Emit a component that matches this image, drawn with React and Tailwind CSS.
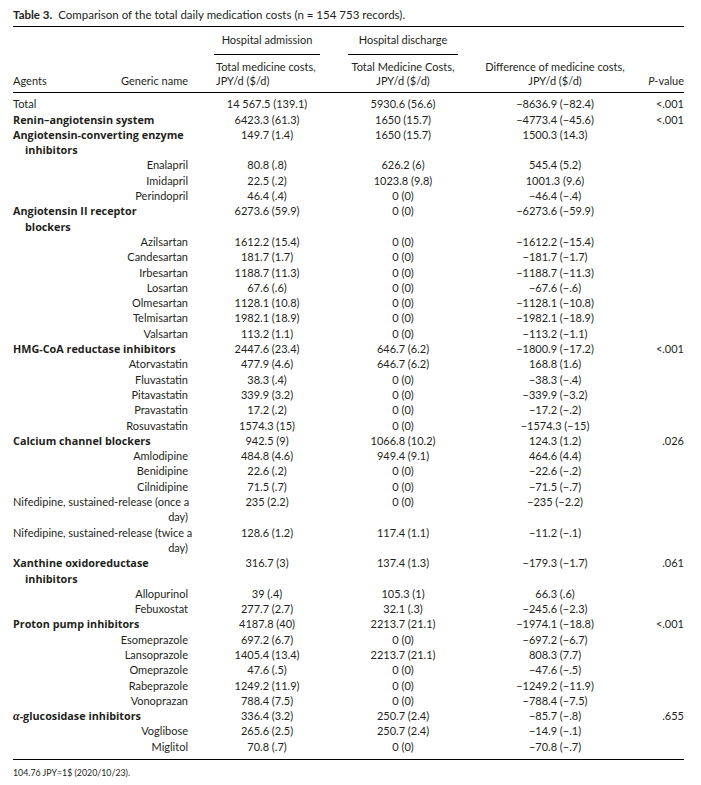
const rows = [
  { kind: 'plain', name: 'Total', a: '14 567.5 (139.1)', d: '5930.6 (56.6)', diff: '−8636.9 (−82.4)', p: '<.001' },
  { kind: 'cat', name: ['Renin–angiotensin system'], a: '6423.3 (61.3)', d: '1650 (15.7)', diff: '−4773.4 (−45.6)', p: '<.001' },
  { kind: 'cat', name: ['Angiotensin-converting enzyme', 'inhibitors'], a: '149.7 (1.4)', d: '1650 (15.7)', diff: '1500.3 (14.3)' },
  { name: 'Enalapril', a: '80.8 (.8)', d: '626.2 (6)', diff: '545.4 (5.2)' },
  { name: 'Imidapril', a: '22.5 (.2)', d: '1023.8 (9.8)', diff: '1001.3 (9.6)' },
  { name: 'Perindopril', a: '46.4 (.4)', d: '0 (0)', diff: '−46.4 (−.4)' },
  { kind: 'cat', name: ['Angiotensin II receptor', 'blockers'], a: '6273.6 (59.9)', d: '0 (0)', diff: '−6273.6 (−59.9)' },
  { name: 'Azilsartan', a: '1612.2 (15.4)', d: '0 (0)', diff: '−1612.2 (−15.4)' },
  { name: 'Candesartan', a: '181.7 (1.7)', d: '0 (0)', diff: '−181.7 (−1.7)' },
  { name: 'Irbesartan', a: '1188.7 (11.3)', d: '0 (0)', diff: '−1188.7 (−11.3)' },
  { name: 'Losartan', a: '67.6 (.6)', d: '0 (0)', diff: '−67.6 (−.6)' },
  { name: 'Olmesartan', a: '1128.1 (10.8)', d: '0 (0)', diff: '−1128.1 (−10.8)' },
  { name: 'Telmisartan', a: '1982.1 (18.9)', d: '0 (0)', diff: '−1982.1 (−18.9)' },
  { name: 'Valsartan', a: '113.2 (1.1)', d: '0 (0)', diff: '−113.2 (−1.1)' },
  { kind: 'cat', name: ['HMG-CoA reductase inhibitors'], a: '2447.6 (23.4)', d: '646.7 (6.2)', diff: '−1800.9 (−17.2)', p: '<.001' },
  { name: 'Atorvastatin', a: '477.9 (4.6)', d: '646.7 (6.2)', diff: '168.8 (1.6)' },
  { name: 'Fluvastatin', a: '38.3 (.4)', d: '0 (0)', diff: '−38.3 (−.4)' },
  { name: 'Pitavastatin', a: '339.9 (3.2)', d: '0 (0)', diff: '−339.9 (−3.2)' },
  { name: 'Pravastatin', a: '17.2 (.2)', d: '0 (0)', diff: '−17.2 (−.2)' },
  { name: 'Rosuvastatin', a: '1574.3 (15)', d: '0 (0)', diff: '−1574.3 (−15)' },
  { kind: 'cat', name: ['Calcium channel blockers'], a: '942.5 (9)', d: '1066.8 (10.2)', diff: '124.3 (1.2)', p: '.026' },
  { name: 'Amlodipine', a: '484.8 (4.6)', d: '949.4 (9.1)', diff: '464.6 (4.4)' },
  { name: 'Benidipine', a: '22.6 (.2)', d: '0 (0)', diff: '−22.6 (−.2)' },
  { name: 'Cilnidipine', a: '71.5 (.7)', d: '0 (0)', diff: '−71.5 (−.7)' },
  { kind: 'wrap', name: ['Nifedipine, sustained-release (once a', 'day)'], a: '235 (2.2)', d: '0 (0)', diff: '−235 (−2.2)' },
  { kind: 'wrap', name: ['Nifedipine, sustained-release (twice a', 'day)'], a: '128.6 (1.2)', d: '117.4 (1.1)', diff: '−11.2 (−.1)' },
  { kind: 'cat', name: ['Xanthine oxidoreductase', 'inhibitors'], a: '316.7 (3)', d: '137.4 (1.3)', diff: '−179.3 (−1.7)', p: '.061' },
  { name: 'Allopurinol', a: '39 (.4)', d: '105.3 (1)', diff: '66.3 (.6)' },
  { name: 'Febuxostat', a: '277.7 (2.7)', d: '32.1 (.3)', diff: '−245.6 (−2.3)' },
  { kind: 'cat', name: ['Proton pump inhibitors'], a: '4187.8 (40)', d: '2213.7 (21.1)', diff: '−1974.1 (−18.8)', p: '<.001' },
  { name: 'Esomeprazole', a: '697.2 (6.7)', d: '0 (0)', diff: '−697.2 (−6.7)' },
  { name: 'Lansoprazole', a: '1405.4 (13.4)', d: '2213.7 (21.1)', diff: '808.3 (7.7)' },
  { name: 'Omeprazole', a: '47.6 (.5)', d: '0 (0)', diff: '−47.6 (−.5)' },
  { name: 'Rabeprazole', a: '1249.2 (11.9)', d: '0 (0)', diff: '−1249.2 (−11.9)' },
  { name: 'Vonoprazan', a: '788.4 (7.5)', d: '0 (0)', diff: '−788.4 (−7.5)' },
  { kind: 'alpha', name: ['-glucosidase inhibitors'], a: '336.4 (3.2)', d: '250.7 (2.4)', diff: '−85.7 (−.8)', p: '.655' },
  { name: 'Voglibose', a: '265.6 (2.5)', d: '250.7 (2.4)', diff: '−14.9 (−.1)' },
  { name: 'Miglitol', a: '70.8 (.7)', d: '0 (0)', diff: '−70.8 (−.7)' },
];

function NameCell({ row }) {
  if (row.kind === 'plain') {
    return <div>{row.name}</div>;
  }
  if (row.kind === 'cat' || row.kind === 'alpha') {
    // bold group names are set wider than the body text
    return (
      <div className="font-bold whitespace-nowrap font-['Open_Sans',sans-serif] text-[10.8px] leading-[15.3px]">
        <div className="h-[15.3px]">
          {row.kind === 'alpha' && (
            <span className="italic font-['Liberation_Serif',serif] text-[12px] leading-none">α</span>
          )}
          {row.name[0]}
        </div>
        {row.name[1] && <div className="pl-[12px] h-[15.3px]">{row.name[1]}</div>}
      </div>
    );
  }
  if (row.kind === 'wrap') {
    return (
      <div className="whitespace-nowrap">
        <div>{row.name[0]}</div>
        <div className="text-right">{row.name[1]}</div>
      </div>
    );
  }
  return <div className="text-right">{row.name}</div>;
}

export default function App() {
  return (
    <div className="bg-white w-[701px] h-[785px] text-[#231f20] font-['Lato',sans-serif] text-[11px] leading-[15.3px] pl-[13px] pt-[7px]">
      {/* Caption */}
      <div className="text-[11.5px] leading-[16px] whitespace-nowrap">
        <span className="font-bold">Table 3.</span>
        <span className="ml-[6px]">Comparison of the total daily medication costs (n = 154 753 records).</span>
      </div>

      <table className="mt-[3px] w-[671px] table-fixed border-collapse">
        <colgroup>
          <col className="w-[187px]" />
          <col className="w-[134px]" />
          <col className="w-[138px]" />
          <col className="w-[166px]" />
          <col className="w-[46px]" />
        </colgroup>
        <thead>
          <tr className="border-t-[1.5px] border-black">
            <th />
            <th className="font-normal pt-[5px] align-top">
              <div className="mx-[14px] pb-[7px] border-b border-black">Hospital admission</div>
            </th>
            <th className="font-normal pt-[5px] align-top">
              <div className="mx-[14px] pb-[7px] border-b border-black">Hospital discharge</div>
            </th>
            <th />
            <th />
          </tr>
          <tr className="border-b-[1.5px] border-black leading-[14px]">
            <th className="font-normal align-bottom pr-[12px] pb-[4px]">
              <div className="flex justify-between">
                <span>Agents</span>
                <span>Generic name</span>
              </div>
            </th>
            <th className="font-normal align-bottom pb-[4px] pt-[5px] text-left pl-[16px]">
              Total medicine costs,
              <br />
              JPY/d ($/d)
            </th>
            <th className="font-normal align-bottom pb-[4px] pt-[5px] text-center">
              Total Medicine Costs,
              <br />
              JPY/d ($/d)
            </th>
            <th className="font-normal align-bottom pb-[4px] pt-[5px] text-center">
              Difference of medicine costs,
              <br />
              JPY/d ($/d)
            </th>
            <th className="font-normal align-bottom pb-[4px] text-right">
              <span className="italic">P</span>-value
            </th>
          </tr>
        </thead>
        <tbody className="border-b-[1.5px] border-black">
          {rows.map((row, i) => (
            <tr key={i} className="align-top">
              <td className={`pr-[12px] ${i === 0 ? 'pt-[3px]' : ''} ${i === rows.length - 1 ? 'pb-[5px]' : ''}`}>
                <NameCell row={row} />
              </td>
              <td className={`text-center whitespace-nowrap ${i === 0 ? 'pt-[3px]' : ''}`}>{row.a}</td>
              <td className={`text-center whitespace-nowrap ${i === 0 ? 'pt-[3px]' : ''}`}>{row.d}</td>
              <td className={`text-center whitespace-nowrap ${i === 0 ? 'pt-[3px]' : ''}`}>{row.diff}</td>
              <td className={`text-right whitespace-nowrap ${i === 0 ? 'pt-[3px]' : ''}`}>{row.p || ''}</td>
            </tr>
          ))}
        </tbody>
      </table>

      <div className="mt-[7px] text-[8.8px] leading-[12px]">104.76 JPY=1$ (2020/10/23).</div>
    </div>
  );
}
